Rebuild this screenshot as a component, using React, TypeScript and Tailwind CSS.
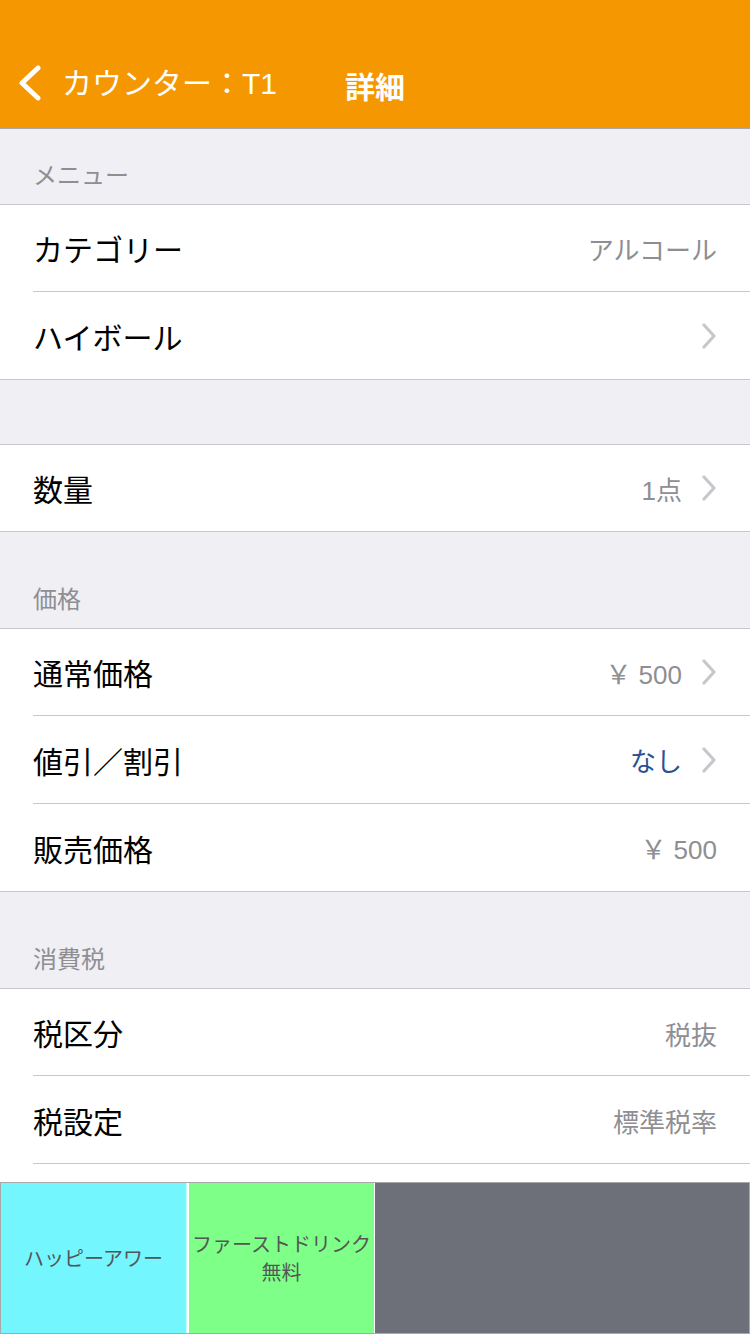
import React from "react";

const JP = "font-['Noto_Sans_CJK_JP','Noto_Sans',sans-serif]";
const VALUE = "font-['Liberation_Sans','Noto_Sans_CJK_JP',sans-serif]";

function Chevron() {
  return (
    <svg width="16" height="26" viewBox="0 0 16 26" className="shrink-0">
      <polyline
        points="3,2 13,13 3,24"
        fill="none"
        stroke="#c7c7cc"
        strokeWidth="3.2"
        strokeLinecap="round"
        strokeLinejoin="round"
      />
    </svg>
  );
}

type Row = {
  label: string;
  value?: string;
  chevron?: boolean;
  blue?: boolean;
};

function SectionHeader({ title, tall }: { title?: string; tall?: boolean }) {
  return (
    <div
      className={`flex items-end px-[33px] pb-[18px] text-[24px] leading-none text-[#8e8e93] ${
        tall ? "h-[96px]" : "h-[75px]"
      }`}
    >
      {title}
    </div>
  );
}

// row heights follow the screenshot: 87 / 88 / 87, single row 86
function rowHeight(i: number, n: number) {
  if (n === 1) return "h-[86px]";
  if (i === 0 || i === n - 1) return "h-[87px]";
  return "h-[88px]";
}

function Group({ rows }: { rows: Row[] }) {
  return (
    <div className="border-y border-[#c8c7cc] bg-white">
      {rows.map((r, i) => {
        const last = i === rows.length - 1;
        return (
          <div key={r.label} className={`flex pl-[33px] ${rowHeight(i, rows.length)}`}>
            <div
              className={`flex flex-1 items-center pr-[33px] ${
                last ? "" : "border-b border-[#c8c7cc]"
              }`}
            >
              <span className="flex-1 text-[30px] leading-none text-black">
                {r.label}
              </span>
              {r.value && (
                <span
                  className={`mt-[5px] text-[26px] leading-none ${VALUE} ${
                    r.blue ? "text-[#2b5190]" : "text-[#8e8e93]"
                  }`}
                >
                  {r.value}
                </span>
              )}
              {r.chevron && (
                <span className="ml-[19px] flex">
                  <Chevron />
                </span>
              )}
            </div>
          </div>
        );
      })}
    </div>
  );
}

export default function App() {
  return (
    <div className={`flex h-[1334px] w-[750px] flex-col overflow-hidden bg-[#efeff4] ${JP}`}>
      <header className="grid h-[129px] shrink-0 grid-cols-[1fr_auto_1fr] items-end border-b border-[#a7a7aa] bg-[#f49700] pb-[27px] text-white">
        <div className="flex items-center">
          <svg width="24" height="36" viewBox="0 0 24 36" className="ml-[18px] mt-[2px]">
            <polyline
              points="20,3 4,18 20,33"
              fill="none"
              stroke="white"
              strokeWidth="5"
              strokeLinecap="round"
              strokeLinejoin="round"
            />
          </svg>
          <span className="ml-[20px] text-[30px] leading-none">
            カウンター：<span className={VALUE}>T1</span>
          </span>
        </div>
        <div className="pb-[1px] text-[30px] font-bold leading-none">詳細</div>
        <div />
      </header>

      <main className="min-h-0 flex-1 overflow-hidden">
        <SectionHeader title="メニュー" />
        <Group
          rows={[
            { label: "カテゴリー", value: "アルコール" },
            { label: "ハイボール", chevron: true },
          ]}
        />
        <div className="h-[64px]" />
        <Group rows={[{ label: "数量", value: "1点", chevron: true }]} />
        <SectionHeader title="価格" tall />
        <Group
          rows={[
            { label: "通常価格", value: "￥ 500", chevron: true },
            { label: "値引／割引", value: "なし", chevron: true, blue: true },
            { label: "販売価格", value: "￥ 500" },
          ]}
        />
        <SectionHeader title="消費税" tall />
        <div className="border-t border-[#c8c7cc] bg-white">
          {[
            { label: "税区分", value: "税抜" },
            { label: "税設定", value: "標準税率" },
          ].map((r, i) => (
            <div
              key={r.label}
              className={`flex pl-[33px] ${i === 0 ? "h-[87px]" : "h-[88px]"}`}
            >
              <div className="flex flex-1 items-center border-b border-[#c8c7cc] pr-[33px]">
                <span className="flex-1 text-[30px] leading-none text-black">
                  {r.label}
                </span>
                <span className="mt-[3px] text-[26px] leading-none text-[#8e8e93]">
                  {r.value}
                </span>
              </div>
            </div>
          ))}
          <div className="h-[88px]" />
        </div>
      </main>

      <footer className="flex h-[152px] shrink-0 border border-[#a9a9a9] bg-white text-[20px] leading-[28px] text-[#555555]">
        <div className="flex w-[185px] items-center justify-center bg-[#74f6ff] text-center">
          ハッピーアワー
        </div>
        <div className="w-[1px] bg-[#c4fbff]" />
        <div className="w-[2px] bg-white" />
        <div className="flex w-[185px] flex-col items-center justify-center bg-[#7dff88] text-center">
          <span>ファーストドリンク</span>
          <span>無料</span>
        </div>
        <div className="w-[1px] bg-white" />
        <div className="flex-1 bg-[#6d7078]" />
      </footer>
    </div>
  );
}
